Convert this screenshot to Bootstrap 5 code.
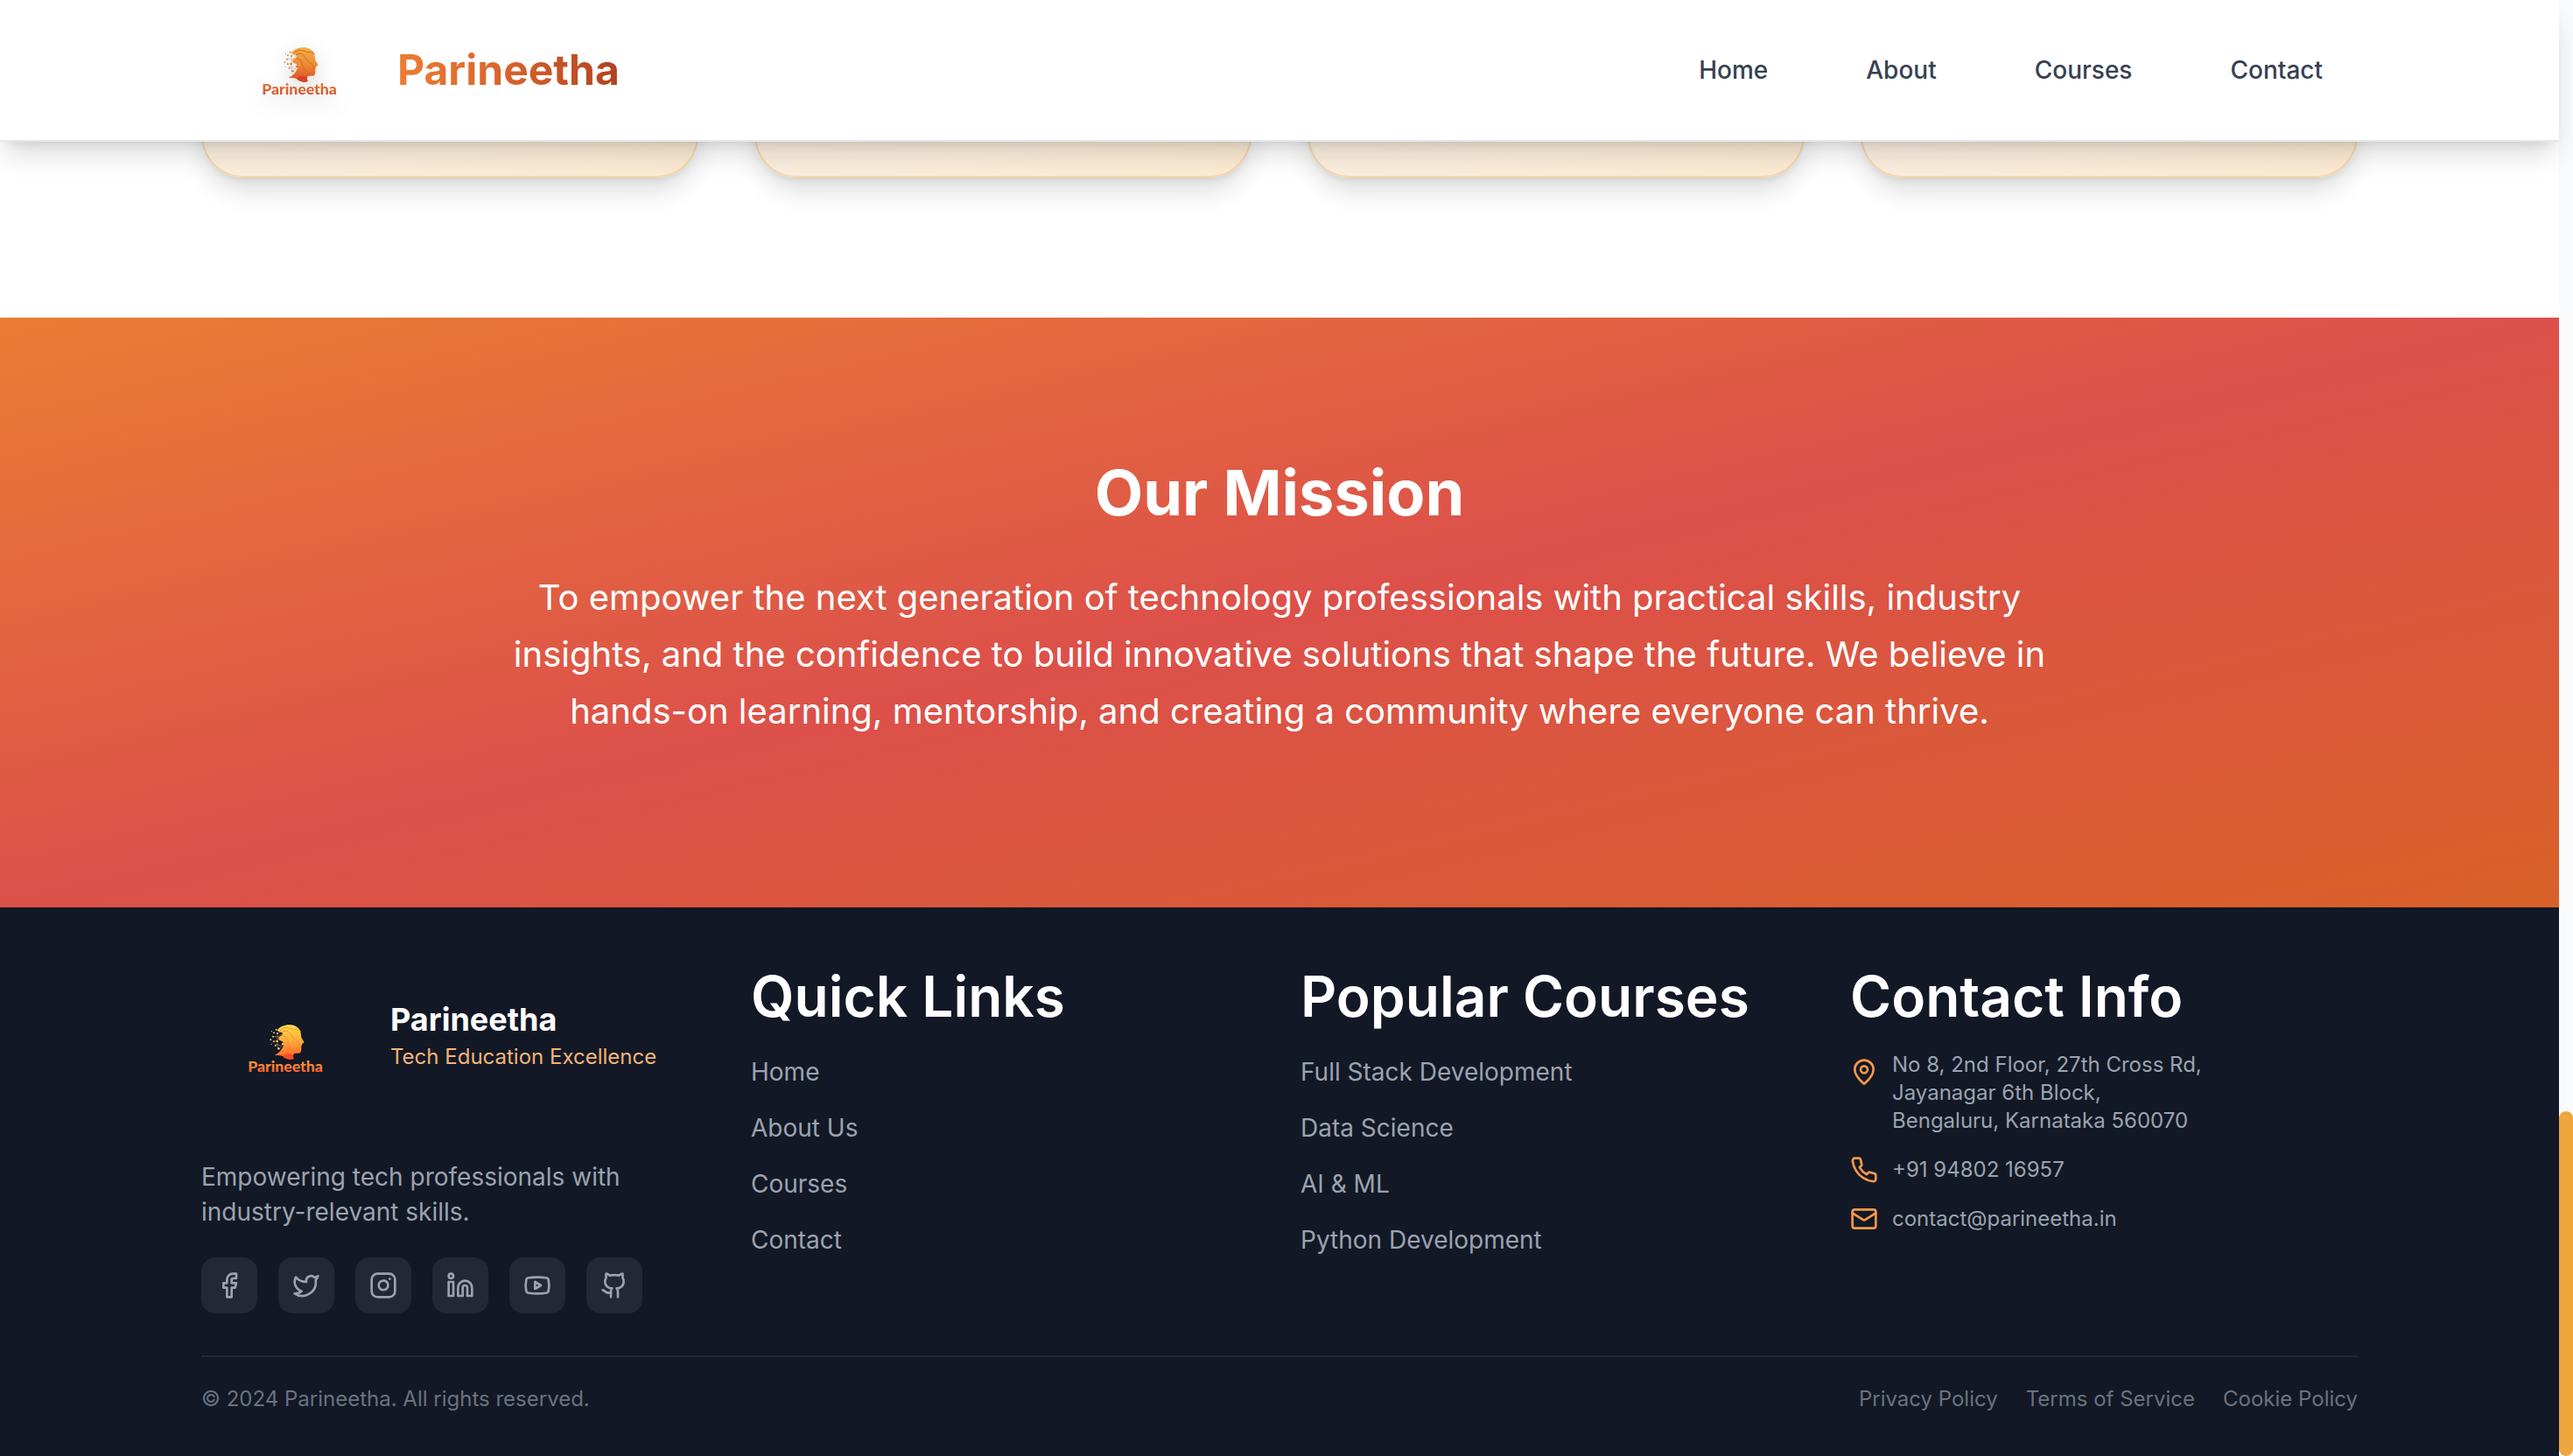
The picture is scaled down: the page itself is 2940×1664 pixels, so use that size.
<!DOCTYPE html>
<html lang="en">
<head>
<meta charset="utf-8">
<meta name="viewport" content="width=device-width, initial-scale=1">
<title>Parineetha</title>
<link href="https://cdn.jsdelivr.net/npm/bootstrap@5.3.0/dist/css/bootstrap.min.css" rel="stylesheet">
<style>
  body { font-family: Inter, "Liberation Sans", sans-serif; font-size: 28px; line-height: 48px; background: #fff; }
  a { text-decoration: none; color: inherit; }
  .wrap { max-width: 2560px; padding: 0 48px; margin: 0 auto; }
  .site-header { background: rgba(255,255,255,.98); border-bottom: 2px solid #e5e7eb; box-shadow: 0 20px 30px -6px rgba(0,0,0,.14), 0 8px 12px -8px rgba(0,0,0,.12); z-index: 10; }
  .site-header .wrap { height: 160px; }
  .site-header .nav-link { padding: 8px 40px; font-weight: 500; color: #374151; }
  .site-header .nav { gap: 32px; }
  .brand-logo { width: 192px; height: 160px; margin-left: 16px; }
  .brand-logo svg { filter: drop-shadow(0 8px 12px rgba(0,0,0,.15)); }
  .brand-name { margin-left: 16px; font-size: 48px; font-weight: 700; background: linear-gradient(90deg, #ed7d33, #d9622b 50%, #b04220); -webkit-background-clip: text; background-clip: text; color: transparent; }
  .feature-row { gap: 64px; padding-bottom: 160px; }
  .feature { flex: 1 1 0; height: 203px; border: 2px solid #f8d6a8; border-top: 0; border-radius: 0 0 48px 48px; background: linear-gradient(to bottom right, #faf3ea, #fdebd3); box-shadow: 0 20px 30px -6px rgba(0,0,0,.14), 0 8px 12px -8px rgba(0,0,0,.12); }
  .mission { padding: 160px 48px 192px; background: linear-gradient(to bottom right, #ea7d34 0%, #dc504a 50%, #d86128 100%); }
  .mission h2 { font-size: 72px; font-weight: 700; line-height: 80px; margin-bottom: 47px; }
  .mission p { font-size: 40px; line-height: 65px; max-width: 1792px; }
  .site-footer { background: #121826; padding: 64px 0 48px; color: #9ca3af; }
  .foot-grid { display: grid; grid-template-columns: repeat(4, 1fr); gap: 48px; }
  .foot-grid h3 { font-size: 64px; font-weight: 600; line-height: 76px; margin-bottom: 24px; color: #fff; white-space: nowrap; }
  .foot-logo { width: 192px; height: 192px; margin-right: 24px; }
  .foot-brand { margin-bottom: 32px; }
  .foot-text { padding-bottom: 24px; }
  .foot-name { font-size: 36px; font-weight: 700; line-height: 46px; color: #fff; }
  .foot-tag { font-size: 24px; line-height: 40px; color: #f3b477; white-space: nowrap; }
  .foot-about { line-height: 40px; margin-bottom: 32px; }
  .foot-links { display: flex; flex-direction: column; gap: 16px; }
  .socials { gap: 24px; }
  .social { width: 64px; height: 64px; border-radius: 16px; background: #222834; }
  .line-icon { width: 32px; height: 32px; fill: none; stroke: currentColor; stroke-width: 2; stroke-linecap: round; stroke-linejoin: round; flex: none; }
  .contact-list { font-size: 24px; line-height: 32px; gap: 24px; font-style: normal; }
  .contact-item { gap: 16px; }
  .contact-item .line-icon { color: #f9994a; }
  .foot-base { margin-top: 48px; padding-top: 32px; border-top: 2px solid #222834; font-size: 24px; line-height: 32px; color: #6b7280; }
  .legal { gap: 32px; }
  .scroll-track { width: 16px; flex: none; background: #f9fafb; }
  .scroll-thumb { height: 394px; border-radius: 8px; background: #f0a63e; }
  .logo-word { font-family: Lato, sans-serif; font-weight: 900; font-size: 53px; line-height: 1; }
</style>
<script src="https://cdn.jsdelivr.net/npm/bootstrap@5.3.0/dist/js/bootstrap.bundle.min.js"></script>
</head>
<body>
<svg width="0" height="0" class="position-absolute" aria-hidden="true">
  <defs>
    <linearGradient id="gold" x1="0" y1="0" x2="0" y2="1"><stop offset="0" stop-color="#f0b445"/><stop offset=".5" stop-color="#ee8a33"/><stop offset="1" stop-color="#dc4a2a"/></linearGradient>
    <linearGradient id="bright" x1="0" y1="0" x2="0" y2="1"><stop offset="0" stop-color="#ffe14c"/><stop offset=".5" stop-color="#ffa638"/><stop offset="1" stop-color="#ff5a28"/></linearGradient>
    <linearGradient id="wordGold" x1="0" y1="0" x2="0" y2="1"><stop offset="0" stop-color="#ea8433"/><stop offset="1" stop-color="#cf4a2e"/></linearGradient>
    <linearGradient id="wordBright" x1="0" y1="0" x2="0" y2="1"><stop offset="0" stop-color="#ffae38"/><stop offset="1" stop-color="#f4552e"/></linearGradient>
    <path id="head" d="M186 93C194 80 212 73 231 74C254 75 268 90 268 110C268 117 272 123 278 132C278 137 271 137 271 141L269 148L269 154C269 162 268 170 261 171L248 171C240 173 240 181 243 190C232 195 216 192 205 181C198 178 188 179 178 178C194 168 204 158 208 142C208 132 203 129 196 128C188 124 190 113 199 112C203 109 206 105 203 101C198 97 192 98 186 93Z"/>
    <path id="head-lines" fill="none" stroke-width="3" stroke-linecap="round" d="M197 92C212 77 226 84 238 88C251 92 262 88 266 96M203 99C218 88 228 98 236 112C246 130 263 126 264 146M206 112C224 112 222 135 230 147C236 157 245 156 246 168M184 177C201 166 222 168 238 173"/>
    <path id="dot-links" fill="none" stroke-width="2" d="M172 130H187V150L194 156L207 139M187 130V103L199 96M172 114H192L202 104M180 140L200 145"/>
    <g id="dots"><circle cx="183" cy="90" r="3"/><circle cx="167" cy="96" r="2"/><circle cx="175" cy="101" r="3"/><circle cx="187" cy="103" r="3"/><circle cx="164" cy="125" r="3"/><circle cx="172" cy="114" r="3"/><circle cx="174" cy="131" r="3"/><circle cx="186" cy="130" r="4"/><circle cx="180" cy="145" r="3"/><circle cx="191" cy="155" r="4"/><circle cx="205" cy="139" r="4"/><circle cx="166" cy="140" r="2"/></g>
    <path id="neck" d="M205 181C216 166 228 172 240 174C239 181 241 185 243 190C230 195 216 192 205 181Z"/>
  </defs>
</svg>

<div class="d-flex min-vh-100">
  <div class="flex-grow-1 position-relative d-flex flex-column">
    <header class="site-header position-absolute top-0 start-0 w-100">
      <div class="wrap d-flex align-items-center justify-content-between">
        <a href="#" class="d-flex align-items-center">
          <span class="brand-logo d-flex align-items-center justify-content-center">
            <svg width="100" height="80" viewBox="64 31 300 240" role="img" aria-label="Parineetha logo">
              <use href="#head" fill="url(#gold)"/><use href="#neck" fill="#d8402a"/><use href="#head-lines" stroke="#d9632c"/><use href="#dot-links" stroke="#dba87c"/><use href="#dots" fill="#cf8440"/>
              <text class="logo-word" x="214" y="235" text-anchor="middle" fill="url(#wordGold)">Parineetha</text>
            </svg>
          </span>
          <span class="brand-name">Parineetha</span>
        </a>
        <nav class="nav">
          <a class="nav-link" href="#">Home</a>
          <a class="nav-link" href="#">About</a>
          <a class="nav-link" href="#">Courses</a>
          <a class="nav-link" href="#">Contact</a>
        </nav>
      </div>
    </header>

    <section class="wrap w-100">
      <div class="feature-row d-flex">
        <div class="feature"></div><div class="feature"></div><div class="feature"></div><div class="feature"></div>
      </div>
    </section>

    <section class="mission text-white text-center">
      <h2>Our Mission</h2>
      <p class="mx-auto mb-0">To empower the next generation of technology professionals with practical skills, industry<br>insights, and the confidence to build innovative solutions that shape the future. We believe in<br>hands-on learning, mentorship, and creating a community where everyone can thrive.</p>
    </section>

    <footer class="site-footer flex-grow-1">
      <div class="wrap">
        <div class="foot-grid">
          <div>
            <div class="foot-brand d-flex align-items-center">
              <span class="foot-logo d-flex align-items-center justify-content-center">
                <svg width="100" height="80" viewBox="64 31 300 240" role="img" aria-label="Parineetha logo">
                  <use href="#head" fill="url(#bright)"/><use href="#neck" fill="#ff4a26"/><use href="#head-lines" stroke="#ff8a32"/><use href="#dot-links" stroke="#b88a4a"/><use href="#dots" fill="#f0c060"/>
                  <text class="logo-word" x="214" y="235" text-anchor="middle" fill="url(#wordBright)">Parineetha</text>
                </svg>
              </span>
              <div class="foot-text">
                <div class="foot-name">Parineetha</div>
                <div class="foot-tag">Tech Education Excellence</div>
              </div>
            </div>
            <p class="foot-about">Empowering tech professionals with<br>industry-relevant skills.</p>
            <div class="socials d-flex">
              <a href="#" aria-label="Facebook" class="social d-flex align-items-center justify-content-center"><svg class="line-icon" viewBox="0 0 24 24"><path d="M18 2h-3a5 5 0 0 0-5 5v3H7v4h3v8h4v-8h3l1-4h-4V7a1 1 0 0 1 1-1h3z"/></svg></a>
              <a href="#" aria-label="Twitter" class="social d-flex align-items-center justify-content-center"><svg class="line-icon" viewBox="0 0 24 24"><path d="M22 4s-.7 2.100-2 3.400c1.600 10-9.400 17.300-18 11.600 2.200.1 4.400-.6 6-2C3 15.500.5 9.600 3 5c2.200 2.600 5.600 4.100 9 4-.9-4.200 4-6.600 7-3.800 1.100 0 3-1.200 3-1.200z"/></svg></a>
              <a href="#" aria-label="Instagram" class="social d-flex align-items-center justify-content-center"><svg class="line-icon" viewBox="0 0 24 24"><rect x="2" y="2" width="20" height="20" rx="5"/><path d="M16 11.370A4 4 0 1 1 12.630 8 4 4 0 0 1 16 11.370zM17.500 6.500h.01"/></svg></a>
              <a href="#" aria-label="LinkedIn" class="social d-flex align-items-center justify-content-center"><svg class="line-icon" viewBox="0 0 24 24"><path d="M16 8a6 6 0 0 1 6 6v7h-4v-7a2 2 0 0 0-2-2 2 2 0 0 0-2 2v7h-4v-7a6 6 0 0 1 6-6z"/><rect x="2" y="9" width="4" height="12"/><circle cx="4" cy="4" r="2"/></svg></a>
              <a href="#" aria-label="YouTube" class="social d-flex align-items-center justify-content-center"><svg class="line-icon" viewBox="0 0 24 24"><path d="M2.500 17a24.120 24.120 0 0 1 0-10 2 2 0 0 1 1.400-1.400 49.560 49.560 0 0 1 16.200 0A2 2 0 0 1 21.500 7a24.120 24.120 0 0 1 0 10 2 2 0 0 1-1.400 1.400 49.550 49.550 0 0 1-16.200 0A2 2 0 0 1 2.500 17"/><path d="m10 15 5-3-5-3z"/></svg></a>
              <a href="#" aria-label="GitHub" class="social d-flex align-items-center justify-content-center"><svg class="line-icon" viewBox="0 0 24 24"><path d="M15 22v-4a4.800 4.800 0 0 0-1-3.500c3 0 6-2 6-5.500.08-1.250-.27-2.480-1-3.500.28-1.150.28-2.350 0-3.500 0 0-1 0-3 1.500-2.640-.5-5.360-.5-8 0C6 2 5 2 5 2c-.3 1.150-.3 2.350 0 3.500A5.403 5.403 0 0 0 4 9c0 3.500 3 5.500 6 5.500-.39.49-.68 1.050-.85 1.650-.17.6-.22 1.230-.15 1.850v4"/><path d="M9 18c-4.510 2-5-2-7-2"/></svg></a>
            </div>
          </div>
          <div>
            <h3>Quick Links</h3>
            <ul class="foot-links list-unstyled mb-0">
              <li><a href="#">Home</a></li>
              <li><a href="#">About Us</a></li>
              <li><a href="#">Courses</a></li>
              <li><a href="#">Contact</a></li>
            </ul>
          </div>
          <div>
            <h3>Popular Courses</h3>
            <ul class="foot-links list-unstyled mb-0">
              <li><a href="#">Full Stack Development</a></li>
              <li><a href="#">Data Science</a></li>
              <li><a href="#">AI &amp; ML</a></li>
              <li><a href="#">Python Development</a></li>
            </ul>
          </div>
          <div>
            <h3>Contact Info</h3>
            <address class="contact-list d-flex flex-column mb-0">
              <div class="contact-item d-flex align-items-start">
                <svg class="line-icon mt-2" viewBox="0 0 24 24"><path d="M20 10c0 4.993-5.539 10.193-7.399 11.799a1 1 0 0 1-1.202 0C9.539 20.193 4 14.993 4 10a8 8 0 0 1 16 0"/><circle cx="12" cy="10" r="3"/></svg>
                <span>No 8, 2nd Floor, 27th Cross Rd,<br>Jayanagar 6th Block,<br>Bengaluru, Karnataka 560070</span>
              </div>
              <div class="contact-item d-flex align-items-center">
                <svg class="line-icon" viewBox="0 0 24 24"><path d="M22 16.920v3a2 2 0 0 1-2.180 2 19.790 19.790 0 0 1-8.630-3.070 19.500 19.500 0 0 1-6-6 19.790 19.790 0 0 1-3.070-8.670A2 2 0 0 1 4.110 2h3a2 2 0 0 1 2 1.720 12.840 12.840 0 0 0 .7 2.810 2 2 0 0 1-.45 2.110L8.090 9.910a16 16 0 0 0 6 6l1.270-1.270a2 2 0 0 1 2.110-.45 12.840 12.840 0 0 0 2.810.7A2 2 0 0 1 22 16.920z"/></svg>
                <a href="#">+91 94802 16957</a>
              </div>
              <div class="contact-item d-flex align-items-center">
                <svg class="line-icon" viewBox="0 0 24 24"><rect x="2" y="4" width="20" height="16" rx="2"/><path d="m22 7-8.970 5.700a1.940 1.940 0 0 1-2.060 0L2 7"/></svg>
                <a href="#">contact@parineetha.in</a>
              </div>
            </address>
          </div>
        </div>
        <div class="foot-base d-flex justify-content-between">
          <span>© 2024 Parineetha. All rights reserved.</span>
          <div class="legal d-flex"><a href="#">Privacy Policy</a><a href="#">Terms of Service</a><a href="#">Cookie Policy</a></div>
        </div>
      </div>
    </footer>
  </div>
  <div class="scroll-track d-flex flex-column justify-content-end" aria-hidden="true"><div class="scroll-thumb"></div></div>
</div>
</body>
</html>
